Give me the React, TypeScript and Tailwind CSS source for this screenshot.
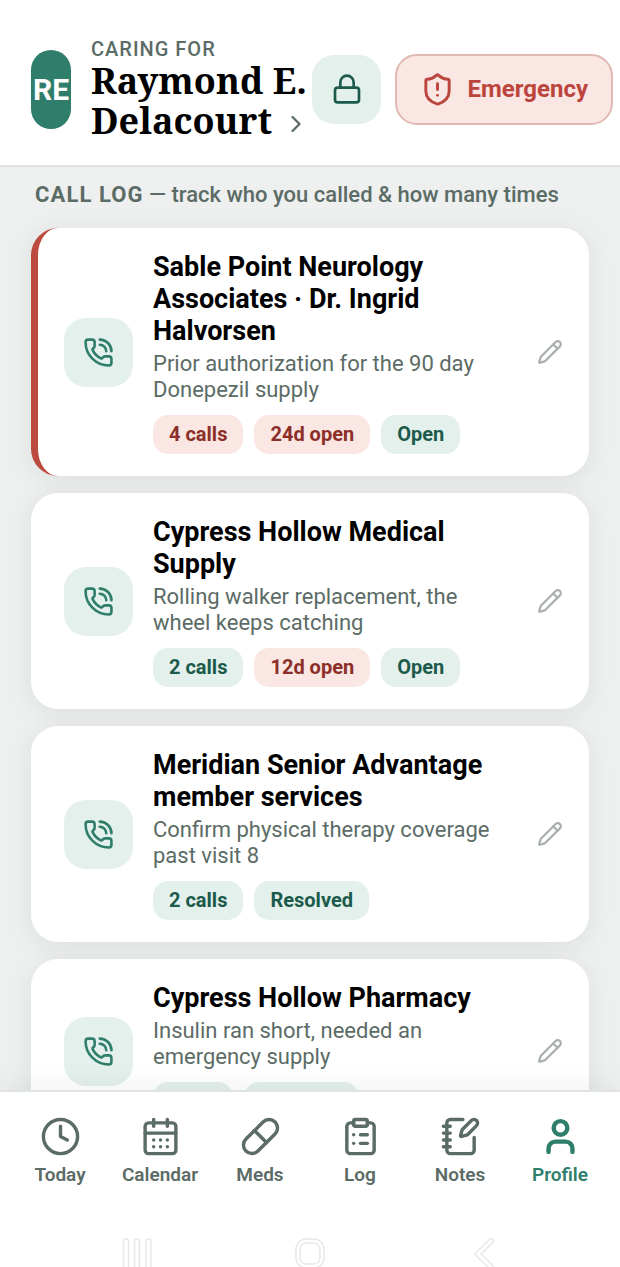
import {
  CalendarDays,
  ChevronRight,
  ClipboardList,
  Clock,
  Lock,
  NotebookPen,
  Pencil,
  PhoneCall,
  Pill,
  ShieldAlert,
  User,
} from "lucide-react";
import type { LucideIcon } from "lucide-react";

type Tone = "red" | "green";

interface Call {
  id:      number;
  name:    string;
  reason:  string;
  urgent?: boolean;
  chips:   { label: string; tone: Tone }[];
}

const CALLS: Call[] = [
  {
    id: 1,
    name: "Sable Point Neurology Associates · Dr. Ingrid Halvorsen",
    reason: "Prior authorization for the 90 day Donepezil supply",
    urgent: true,
    chips: [
      { label: "4 calls", tone: "red" },
      { label: "24d open", tone: "red" },
      { label: "Open", tone: "green" },
    ],
  },
  {
    id: 2,
    name: "Cypress Hollow Medical Supply",
    reason: "Rolling walker replacement, the wheel keeps catching",
    chips: [
      { label: "2 calls", tone: "green" },
      { label: "12d open", tone: "red" },
      { label: "Open", tone: "green" },
    ],
  },
  {
    id: 3,
    name: "Meridian Senior Advantage member services",
    reason: "Confirm physical therapy coverage past visit 8",
    chips: [
      { label: "2 calls", tone: "green" },
      { label: "Resolved", tone: "green" },
    ],
  },
  {
    id: 4,
    name: "Cypress Hollow Pharmacy",
    reason: "Insulin ran short, needed an emergency supply",
    chips: [
      { label: "1 call", tone: "green" },
      { label: "Resolved", tone: "green" },
    ],
  },
];

const TABS: { label: string; icon: LucideIcon }[] = [
  { label: "Today",    icon: Clock },
  { label: "Calendar", icon: CalendarDays },
  { label: "Meds",     icon: Pill },
  { label: "Log",      icon: ClipboardList },
  { label: "Notes",    icon: NotebookPen },
  { label: "Profile",  icon: User },
];

const CHIP_TONES: Record<Tone, string> = {
  red:   "bg-[#fae6e3] text-[#8c2f28]",
  green: "bg-[#e3f0eb] text-[#1c5a4c]",
};

function Header() {
  return (
    <header className="flex shrink-0 items-center border-b-2 border-[#dfe4e2] bg-white pt-[37px] pr-[7px] pb-6 pl-[31px]">
      <div className="mr-5 flex h-[79px] w-10 shrink-0 items-center justify-center rounded-full bg-[#2f7d6b] text-[30px] font-bold text-white">
        RE
      </div>
      <button type="button" className="min-w-0 flex-1 text-left">
        <span className="block text-[20px] leading-6 font-medium tracking-wider text-[#5b6b66]">CARING FOR</span>
        <span className="block font-['Noto_Serif','DejaVu_Serif_Condensed','DejaVu_Serif',serif] text-[36px] leading-10 font-bold text-black">
          Raymond E. Delacourt
          <ChevronRight size={28} className="ml-[10px] inline text-[#5b6b66]" />
        </span>
      </button>
      <button
        type="button"
        aria-label="Lock"
        className="mr-[14px] flex size-[69px] shrink-0 items-center justify-center rounded-[22px] bg-[#e3f0eb] text-[#1c5a4c]"
      >
        <Lock size={32} />
      </button>
      <button
        type="button"
        className="flex h-[71px] shrink-0 items-center gap-3 rounded-[22px] border-2 border-[#e0b8b4] bg-[#fae6e3] px-[23px] text-[24px] font-bold text-[#bb453d]"
      >
        <ShieldAlert size={35} />
        Emergency
      </button>
    </header>
  );
}

function CallCard({ call }: { call: Call }) {
  return (
    <li
      className={`flex items-center rounded-[27px] bg-white py-[22px] pr-[18px] shadow-[0_4px_24px_rgba(20,40,35,0.08)] ${
        call.urgent ? "border-l-[7px] border-[#bb4a3f] pl-[26px]" : "pl-[33px]"
      }`}
    >
      <div className="mr-5 flex size-[69px] shrink-0 items-center justify-center rounded-[22px] bg-[#e3f0eb] text-[#2f7d6b]">
        <PhoneCall size={31} />
      </div>
      <div className="min-w-0 flex-1">
        <h3 className="pt-px text-[27px] leading-8 font-bold text-black">{call.name}</h3>
        <p className="mt-1 text-[22px] leading-[26px] text-[#5b6b66]">{call.reason}</p>
        <div className="mt-3 flex gap-[11px]">
          {call.chips.map(chip => (
            <span
              key={chip.label}
              className={`rounded-[15px] px-4 text-[20px] leading-[39px] font-bold ${CHIP_TONES[chip.tone]}`}
            >
              {chip.label}
            </span>
          ))}
        </div>
      </div>
      <button type="button" aria-label={`Edit ${call.name}`} className="ml-4 shrink-0 p-2 text-[#a9afad]">
        <Pencil size={26} />
      </button>
    </li>
  );
}

function TabBar() {
  return (
    <nav className="grid grid-cols-6 border-t-2 border-[#dfe4e2] px-[10px] pt-6">
      {TABS.map(({ label, icon: Icon }) => {
        const active = label === "Profile";
        return (
          <a
            key={label}
            href={`#${label.toLowerCase()}`}
            aria-current={active ? "page" : undefined}
            className={`flex flex-col items-center gap-[6px] text-[19px] leading-6 font-semibold ${
              active ? "text-[#2f7d6b]" : "text-[#5b6b66]"
            }`}
          >
            <Icon size={41} strokeWidth={active ? 2.6 : 2} />
            {label}
          </a>
        );
      })}
    </nav>
  );
}

// Android navigation keys
function SystemBar() {
  return (
    <div className="flex h-[80px] items-end justify-around px-[50px]">
      <svg width="30" height="30" viewBox="0 0 30 30" fill="none" stroke="#e8e8e8" strokeWidth="1.5">
        <rect x="1.5" y="2" width="5" height="32" rx="2" />
        <rect x="12.5" y="2" width="5" height="32" rx="2" />
        <rect x="24" y="2" width="5" height="32" rx="2" />
      </svg>
      <svg width="30" height="30" viewBox="0 0 30 30" fill="none" stroke="#e8e8e8" strokeWidth="1.5">
        <rect x="1" y="2" width="28" height="29" rx="10" />
        <rect x="5" y="6" width="20" height="21" rx="6" />
      </svg>
      <svg width="30" height="30" viewBox="0 0 30 30" fill="none" strokeLinecap="round">
        <path d="M23 4 10 17l14 14" stroke="#e8e8e8" strokeWidth="6" />
        <path d="M23 4 10 17l14 14" stroke="#fff" strokeWidth="3" />
      </svg>
    </div>
  );
}

export default function App() {
  return (
    <div className="flex h-screen flex-col overflow-hidden bg-[#edf0ef] font-[Roboto,sans-serif]">
      <Header />
      <main className="min-h-0 flex-1 overflow-hidden px-[31px] pt-[15px]">
        <h2 className="pl-1 text-[22px] leading-[26px] font-medium text-[#5b6b66]">
          <span className="font-bold tracking-wider">CALL LOG</span> — track who you called &amp; how many times
        </h2>
        <ul className="mt-5 flex flex-col gap-[17px]">
          {CALLS.map(call => (
            <CallCard key={call.id} call={call} />
          ))}
        </ul>
      </main>
      <footer className="relative shrink-0 bg-white shadow-[0_-4px_28px_rgba(20,40,35,0.06)]">
        <TabBar />
        <SystemBar />
      </footer>
    </div>
  );
}
